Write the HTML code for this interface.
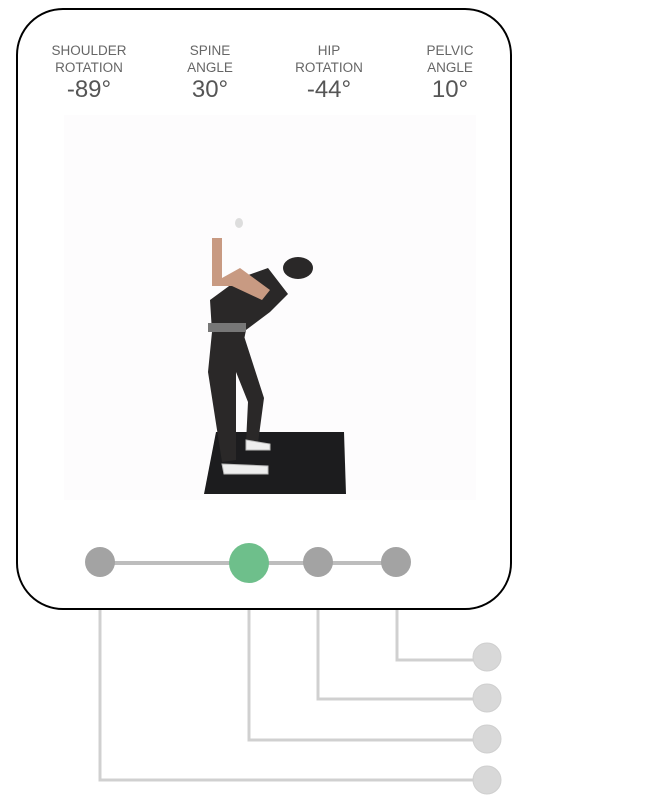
<!DOCTYPE html>
<html><head><style>
body{margin:0;background:#fff;width:650px;height:800px;overflow:hidden;font-family:"Liberation Sans",sans-serif}
.lab{position:absolute;top:42px;width:120px;text-align:center;color:#666;font-size:13.5px;line-height:17px}
.val{display:block;font-size:24px;color:#555;line-height:30px;margin-top:-1px}
</style></head><body>
<svg width="650" height="800" style="position:absolute;left:0;top:0">
<g stroke="#d0d0d0" stroke-width="3" fill="none">
<polyline points="100,610 100,780 487,780"/>
<polyline points="249,610 249,740 487,740"/>
<polyline points="318,610 318,699 487,699"/>
<polyline points="397,610 397,660 487,660"/>
</g>
<g fill="#d8d8d8" stroke="#cfcfcf"><circle cx="487" cy="657" r="14"/><circle cx="487" cy="698" r="14"/><circle cx="487" cy="739" r="14"/><circle cx="487" cy="780" r="14"/></g>
<rect x="17" y="9" width="494" height="600" rx="46" fill="#fff" stroke="#000" stroke-width="2"/>
<rect x="64" y="115" width="412" height="385" fill="#fdfcfd"/>
<polygon points="216,432 344,432 346,494 204,494" fill="#1c1c1e"/>
<g fill="#2a2828">
<path d="M212,332 L244,336 L264,398 L258,443 L246,443 L248,402 L236,372 L236,460 L222,462 L208,372 Z"/>
<path d="M210,300 L240,278 L268,268 L288,294 L270,312 L246,330 L244,340 L212,332 Z"/>
<ellipse cx="298" cy="268" rx="15" ry="11"/>
</g>
<rect x="208" y="323" width="38" height="9" fill="#777"/>
<path d="M212,238 L222,238 L222,278 L240,268 L270,290 L262,300 L232,286 L212,286 Z" fill="#c89a82"/>
<path d="M222,464 L268,466 L268,474 L224,474 Z M246,440 L270,444 L270,450 L246,450 Z" fill="#eee" stroke="#bbb"/>
<ellipse cx="239" cy="223" rx="4" ry="5" fill="#ddd"/>
<line x1="100" y1="563" x2="396" y2="563" stroke="#bdbdbd" stroke-width="4"/>
<circle cx="100" cy="562" r="15" fill="#a3a3a3"/>
<circle cx="318" cy="562" r="15" fill="#a3a3a3"/>
<circle cx="396" cy="562" r="15" fill="#a3a3a3"/>
<circle cx="249" cy="563" r="20" fill="#6ebf8b"/>
</svg>
<div class="lab" style="left:29px">SHOULDER<br>ROTATION<span class="val">-89°</span></div>
<div class="lab" style="left:150px">SPINE<br>ANGLE<span class="val">30°</span></div>
<div class="lab" style="left:269px">HIP<br>ROTATION<span class="val">-44°</span></div>
<div class="lab" style="left:390px">PELVIC<br>ANGLE<span class="val">10°</span></div>
</body></html>
